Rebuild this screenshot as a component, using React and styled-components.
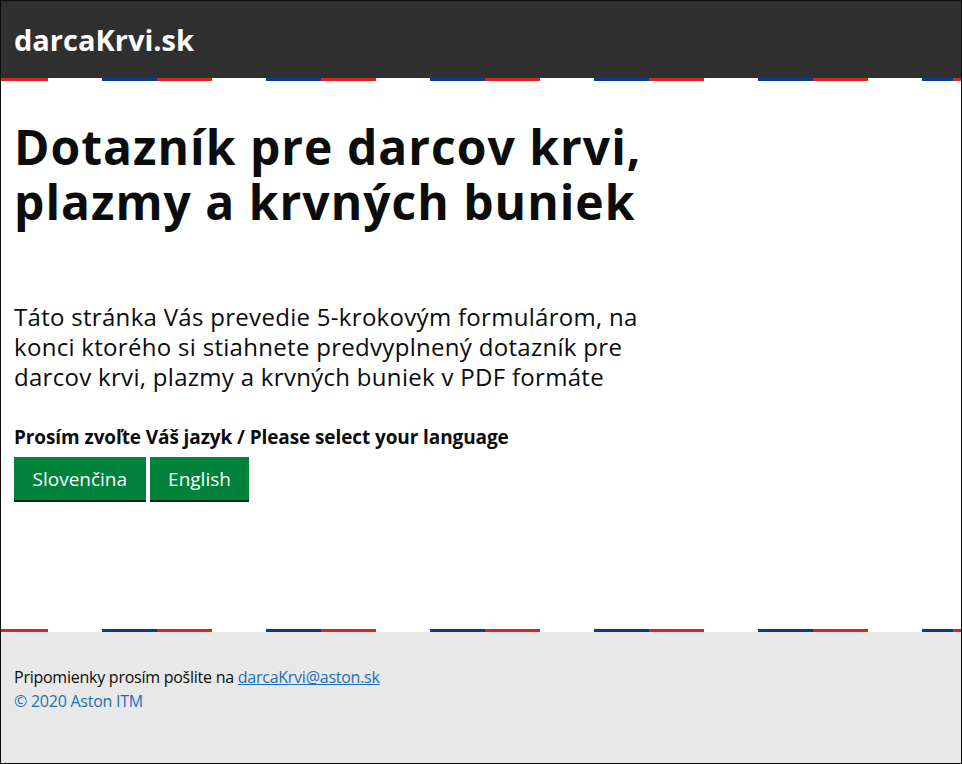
import React from 'react';
import styled, { createGlobalStyle } from 'styled-components';

const GlobalStyle = createGlobalStyle`
  html, body {
    margin: 0;
    padding: 0;
    background: #ffffff;
  }
  body {
    font-family: 'Open Sans', 'Noto Sans', sans-serif;
    color: #0b0c0c;
  }
`;

const Page = styled.div`
  box-sizing: border-box;
  height: 764px;
  border: 1px solid #0b0c0c;
  display: flex;
  flex-direction: column;
`;

// red / white / blue dashes under the header and above the footer
const Stripe = styled.div`
  height: 3px;
  background-image: repeating-linear-gradient(
    to right,
    #d8261c 0,
    #d8261c 55px,
    #ffffff 55px,
    #ffffff 109px,
    #0b3a8c 109px,
    #0b3a8c 164px
  );
  background-position: -8px 0;
`;

const Header = styled.header`
  height: 77px;
  background: #303030;
  display: flex;
  align-items: center;
  padding: 0 13px;
`;

const Logo = styled.a`
  color: #ffffff;
  font-size: 29px;
  font-weight: 700;
  text-decoration: none;
`;

const Main = styled.main`
  flex: 1;
  padding: 38px 13px 0;
`;

const Heading = styled.h1`
  margin: 0;
  font-size: 48px;
  line-height: 55px;
  font-weight: 700;
  letter-spacing: 1px;
`;

const Lead = styled.p`
  margin: 73px 0 0;
  font-size: 24px;
  line-height: 30px;
  letter-spacing: 0.3px;
`;

const Label = styled.div`
  margin-top: 33px;
  font-size: 19px;
  line-height: 25px;
  font-weight: 700;
  letter-spacing: -0.1px;
`;

const ButtonRow = styled.div`
  display: flex;
  gap: 4px;
  margin-top: 7px;
`;

const Button = styled.button`
  font-family: inherit;
  font-size: 19px;
  line-height: 25px;
  color: #ffffff;
  background: #00823b;
  border: 0;
  border-radius: 0;
  padding: 10px 18.5px 8px;
  box-shadow: 0 2px 0 #002d18;
  cursor: pointer;
`;

const Footer = styled.footer`
  height: 131px;
  background: #e8e8e8;
  padding: 33px 13px 0;
  box-sizing: border-box;
  font-size: 16px;
  line-height: 24px;
  letter-spacing: -0.25px;
`;

const Link = styled.a`
  color: #1d70b8;
  text-decoration: underline;
`;

const Copyright = styled.div`
  color: #1d70b8;
`;

export default function App() {
  return (
    <Page>
      <GlobalStyle />
      <Header>
        <Logo href="#">darcaKrvi.sk</Logo>
      </Header>
      <Stripe />
      <Main>
        <Heading>
          Dotazník pre darcov krvi,
          <br />
          plazmy a krvných buniek
        </Heading>
        <Lead>
          Táto stránka Vás prevedie 5-krokovým formulárom, na
          <br />
          konci ktorého si stiahnete predvyplnený dotazník pre
          <br />
          darcov krvi, plazmy a krvných buniek v PDF formáte
        </Lead>
        <Label>Prosím zvoľte Váš jazyk / Please select your language</Label>
        <ButtonRow>
          <Button>Slovenčina</Button>
          <Button>English</Button>
        </ButtonRow>
      </Main>
      <Stripe />
      <Footer>
        <div>
          Pripomienky prosím pošlite na <Link href="#">darcaKrvi@aston.sk</Link>
        </div>
        <Copyright>© 2020 Aston ITM</Copyright>
      </Footer>
    </Page>
  );
}
